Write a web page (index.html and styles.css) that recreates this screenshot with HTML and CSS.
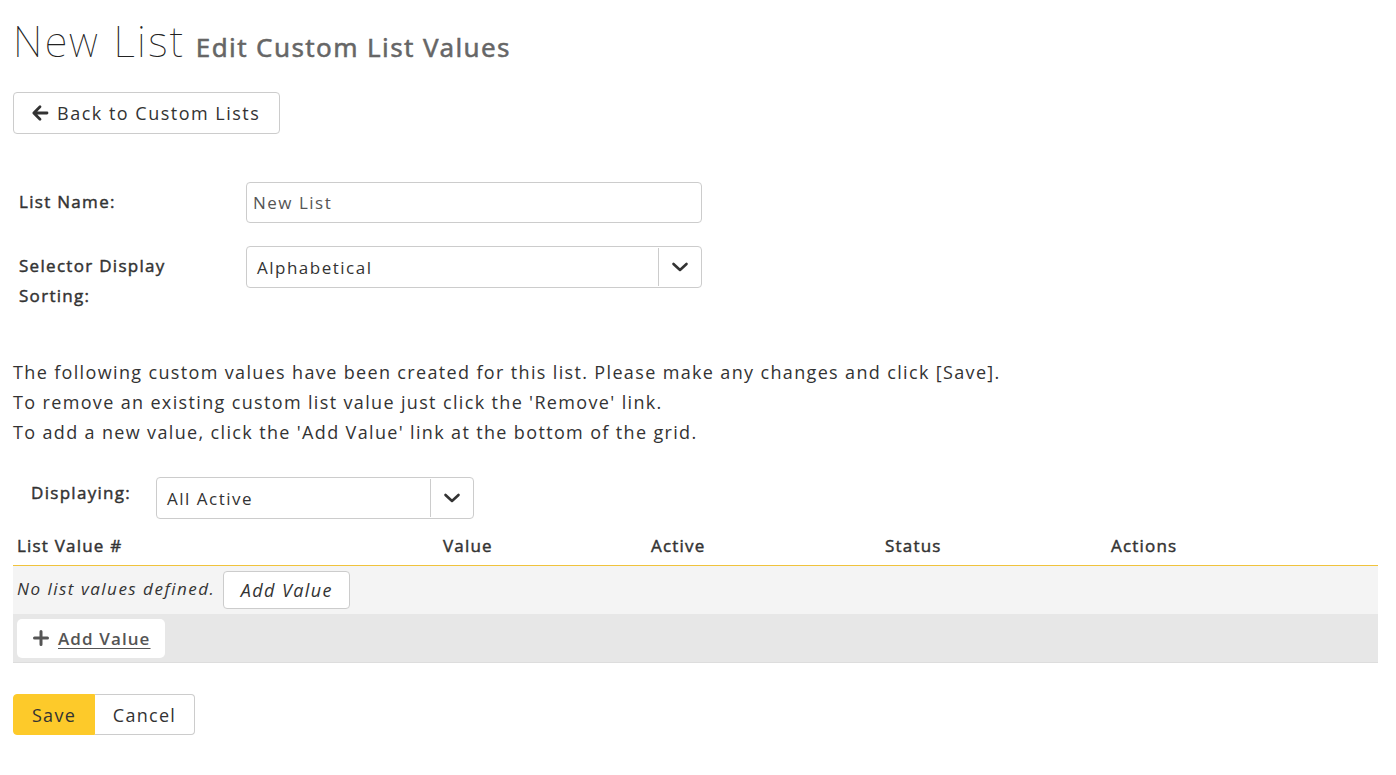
FILE: index.html
```html
<!DOCTYPE html>
<html>
<head>
<meta charset="utf-8">
<link rel="stylesheet" href="styles.css">
</head>
<body>
<div class="page">
  <h1 class="title"><span class="title-main">New List</span> <span class="title-sub">Edit Custom List Values</span></h1>

  <button class="btn back-btn" type="button">
    <svg class="ico" width="18" height="18" viewBox="0 0 18 18"><path d="M9 2.8 L2.8 9 L9 15.2 M3.2 9 H16" fill="none" stroke="#333" stroke-width="2.8" stroke-linecap="round" stroke-linejoin="round"/></svg>
    <span>Back to Custom Lists</span>
  </button>

  <div class="form">
    <div class="form-row">
      <div class="label">List Name:</div>
      <div class="field"><div class="input">New List</div></div>
    </div>
    <div class="form-row">
      <div class="label">Selector Display Sorting:</div>
      <div class="field">
        <div class="select">
          <span class="select-text">Alphabetical</span>
          <span class="select-arrow"><svg width="18" height="12" viewBox="0 0 18 12"><path d="M2.5 3 L9 9 L15.5 3" fill="none" stroke="#333" stroke-width="2.6" stroke-linecap="round" stroke-linejoin="round"/></svg></span>
        </div>
      </div>
    </div>
  </div>

  <div class="intro">
    <p>The following custom values have been created for this list. Please make any changes and click [Save].</p>
    <p>To remove an existing custom list value just click the 'Remove' link.</p>
    <p>To add a new value, click the 'Add Value' link at the bottom of the grid.</p>
  </div>

  <div class="filter">
    <span class="filter-label">Displaying:</span>
    <div class="select select-small">
      <span class="select-text">All Active</span>
      <span class="select-arrow"><svg width="18" height="12" viewBox="0 0 18 12"><path d="M2.5 3 L9 9 L15.5 3" fill="none" stroke="#333" stroke-width="2.6" stroke-linecap="round" stroke-linejoin="round"/></svg></span>
    </div>
  </div>

  <div class="grid">
    <div class="grid-head">
      <div class="c1">List Value #</div>
      <div class="c2">Value</div>
      <div class="c3">Active</div>
      <div class="c4">Status</div>
      <div class="c5">Actions</div>
    </div>
    <div class="grid-empty">
      <span class="empty-text">No list values defined.</span>
      <button class="btn add-inline" type="button">Add Value</button>
    </div>
    <div class="grid-foot">
      <button class="btn add-foot" type="button">
        <svg width="16" height="16" viewBox="0 0 16 16"><path d="M8 1.5 V14.5 M1.5 8 H14.5" stroke="#555" stroke-width="3" stroke-linecap="round"/></svg>
        <span class="u">Add Value</span>
      </button>
    </div>
  </div>

  <div class="actions">
    <button class="btn save" type="button">Save</button><button class="btn cancel" type="button">Cancel</button>
  </div>
</div>
</body>
</html>
```
FILE: styles.css
```css
* { box-sizing: border-box; }
body {
  margin: 0;
  background: #fff;
  color: #333;
  font-family: "Open Sans", "Noto Sans", sans-serif;
  font-size: 17px;
  letter-spacing: 1.3px;
}
.page { padding: 0 18px 0 13px; }
.title {
  margin: 0;
  padding-top: 17px;
  height: 92px;
  font-weight: normal;
  line-height: 48px;
}
.title-main {
  font-family: "Noto Sans", sans-serif;
  font-weight: 100;
  font-size: 42px;
  color: #222;
  letter-spacing: 2.4px;
}
.title-sub {
  font-family: "Noto Sans", sans-serif;
  font-size: 26px;
  font-weight: 400;
  color: #666;
  letter-spacing: 1.4px;
  -webkit-text-stroke: 0.5px #666;
}
.btn {
  font-family: inherit;
  font-size: 17px;
  color: #333;
  background: #fff;
  border: 1px solid #ccc;
  border-radius: 4px;
  cursor: pointer;
  letter-spacing: 1.3px;
}
.back-btn {
  display: flex;
  align-items: center;
  gap: 8px;
  height: 42px;
  width: 267px;
  padding: 0 17px;
  font-size: 18px;
  letter-spacing: 1.5px;
}
.form { margin-top: 48px; }
.form-row {
  display: flex;
  align-items: flex-start;
  margin-bottom: 23px;
}
.form-row:last-child { margin-bottom: 0; }
.label {
  width: 233px;
  padding-left: 6px;
  padding-right: 50px;
  padding-top: 5px;
  font-size: 17px;
  line-height: 30px;
  color: #333;
  letter-spacing: 1.3px;
  -webkit-text-stroke: 0.45px #333;
}
.field { width: 456px; }
.input {
  height: 41px;
  border: 1px solid #ccc;
  border-radius: 4px;
  padding: 0 6px;
  display: flex;
  align-items: center;
  color: #555;
  letter-spacing: 1.5px;
}
.select {
  display: flex;
  height: 42px;
  border: 1px solid #ccc;
  border-radius: 4px;
  align-items: stretch;
  letter-spacing: 1.5px;
}
.select-text {
  flex: 1;
  display: flex;
  align-items: center;
  padding-left: 10px;
  border-right: 1px solid #ccc;
  margin: 1px 0;
}
.select-arrow {
  width: 42px;
  display: flex;
  align-items: center;
  justify-content: center;
}
.intro {
  margin-top: 46px;
  line-height: 30px;
  font-size: 18px;
  letter-spacing: 1.35px;
}
.intro p { margin: 0; }
.filter {
  display: flex;
  align-items: center;
  margin-top: 30px;
  padding-left: 18px;
}
.filter-label {
  width: 125px;
  letter-spacing: 1.3px;
  margin-top: -12px;
  -webkit-text-stroke: 0.45px #333;
}
.select-small { width: 318px; }
.grid { margin-top: 6px; }
.grid-head {
  display: flex;
  height: 41px;
  align-items: center;
  border-bottom: 1px solid #f0c33c;
  padding-left: 4px;
  letter-spacing: 1.2px;
  -webkit-text-stroke: 0.45px #333;
}
.c1 { width: 426px; }
.c2 { width: 208px; }
.c3 { width: 234px; }
.c4 { width: 226px; }
.grid-empty {
  display: flex;
  align-items: center;
  gap: 8px;
  height: 48px;
  background: #f4f4f4;
  padding-left: 4px;
}
.empty-text {
  font-style: italic;
  letter-spacing: 1.5px;
  margin-top: -3px;
}
.add-inline {
  font-style: italic;
  height: 38px;
  width: 127px;
  padding: 0;
  font-size: 18px;
  letter-spacing: 1.4px;
}
.grid-foot {
  height: 49px;
  background: #e7e7e7;
  border-bottom: 1px solid #ddd;
  display: flex;
  align-items: center;
  padding-left: 4px;
}
.add-foot {
  display: flex;
  align-items: center;
  gap: 9px;
  height: 39px;
  width: 148px;
  border: none;
  padding: 0 0 0 16px;
  border-radius: 5px;
  color: #555;
  font-weight: 600;
  font-size: 17px;
  letter-spacing: 1.1px;
}
.u { text-decoration: underline; text-underline-offset: 3px; }
.actions {
  display: flex;
  margin-top: 31px;
}
.save {
  width: 82px;
  height: 41px;
  background: #fdca2a;
  border-color: #fdca2a;
  border-radius: 4px 0 0 4px;
  font-size: 18px;
}
.cancel {
  width: 100px;
  height: 41px;
  border-left: none;
  border-radius: 0 4px 4px 0;
  font-size: 18px;
}
```
